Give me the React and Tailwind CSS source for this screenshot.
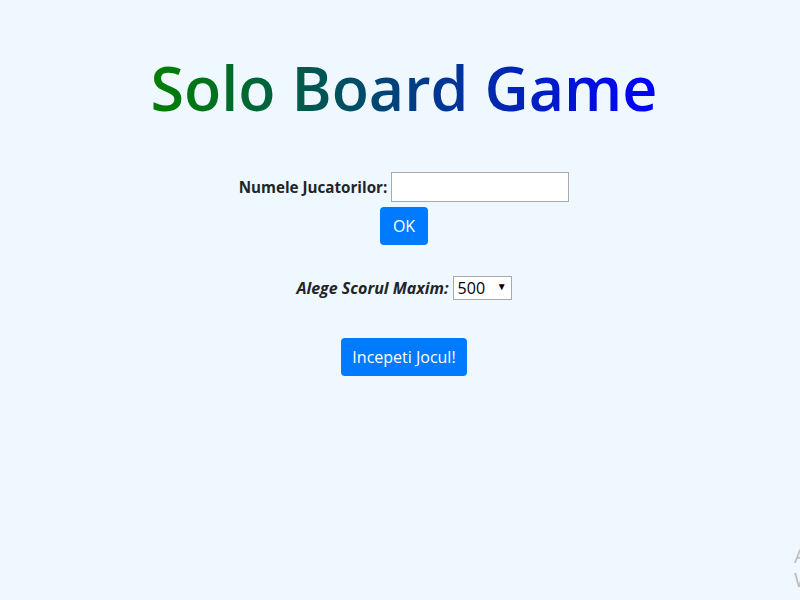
import React from 'react';

const App = () => {
    return (
        <div className="relative min-h-[600px] w-full overflow-hidden bg-[#f0f8ff] pl-[8px] font-['Open_Sans',sans-serif] text-[#212529]">
            <div className="flex flex-col items-center">
                <h1 className="mt-[46px] h-[84px] bg-[linear-gradient(to_right,#008000,#0000ff)] bg-clip-text text-[61px] font-semibold leading-[84px] text-transparent">
                    Solo Board Game
                </h1>
                <div className="mt-[42px] flex items-center gap-[4px]">
                    <label className="text-[15.2px] font-bold">Numele Jucatorilor:</label>
                    <input type="text" className="h-[30px] w-[178px] border border-[#a9a9a9] bg-white px-1 text-[14px]" />
                </div>
                <button className="mt-[5px] h-[38px] w-[48px] rounded-[4px] bg-[#007bff] text-[16px] text-white">OK</button>
                <div className="mt-[31px] flex items-center gap-[4px]">
                    <label className="text-[16px] font-bold italic">Alege Scorul Maxim:</label>
                    <div className="relative">
                        <select className="h-[24px] w-[59px] appearance-none border border-[#a9a9a9] bg-white pl-[4px] text-[16px] leading-[20px] text-black">
                            <option>500</option>
                            <option>1000</option>
                        </select>
                        <span className="pointer-events-none absolute right-[5px] top-[3px] text-[10px] text-black">▼</span>
                    </div>
                </div>
                <button className="mt-[38px] h-[38px] w-[126px] rounded-[4px] bg-[#007bff] text-[16px] text-white">Incepeti Jocul!</button>
            </div>
            <div className="absolute left-[794px] top-[544px] leading-[24px] text-[#b8bcc0]">
                <div className="text-[20px]">Activate Windows</div>
                <div className="text-[13px]">Go to Settings to activate Windows.</div>
            </div>
        </div>
    );
};

export default App;
